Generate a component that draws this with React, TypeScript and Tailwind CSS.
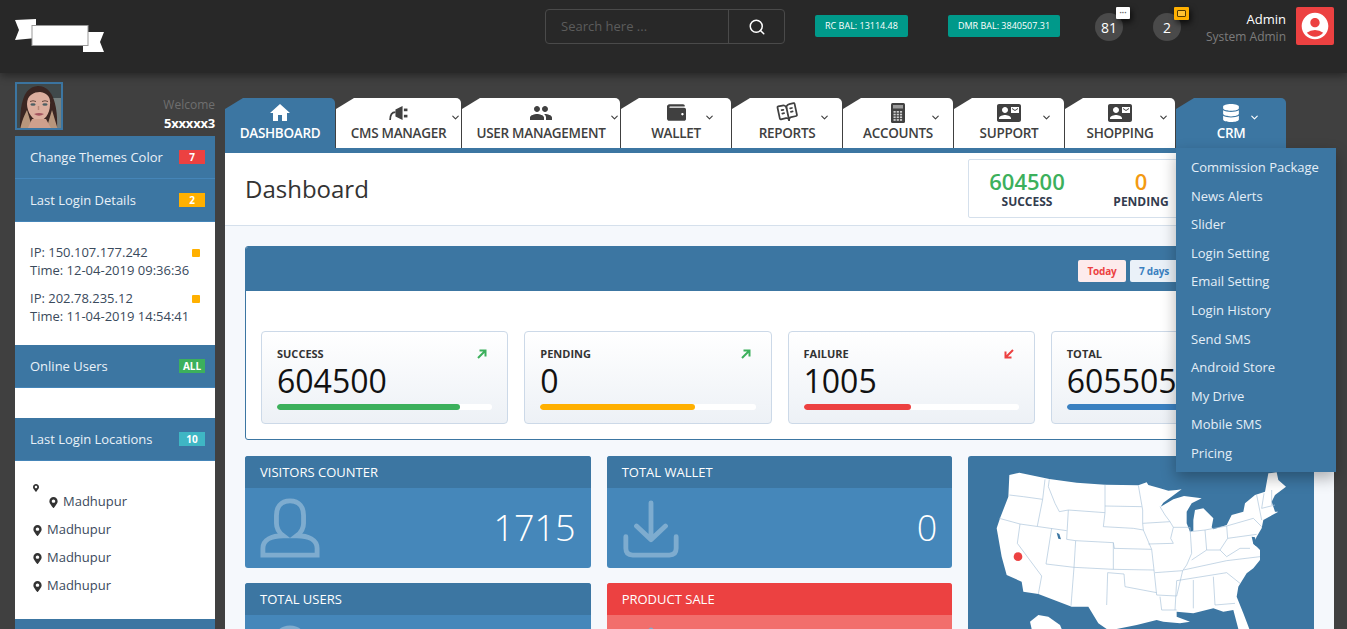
import { BookOpenText, ChevronDown, Search } from 'lucide-react';
import type { ReactNode } from 'react';
import { FaDatabase, FaMapMarkerAlt, FaWallet } from 'react-icons/fa';
import { MdAccountCircle, MdContactMail, MdHome, MdPeople } from 'react-icons/md';

function PlugIcon() {
  return (
    <svg viewBox="0 0 24 18" className="h-[16px] w-[22px]" fill="#404040">
      <path d="M8 5 L16 1 V17 L8 13 Z" />
      <rect x="17.5" y="4" width="4" height="3" />
      <rect x="17.5" y="11" width="4" height="3" />
      <path d="M8 8 C3 8 2 12 2 17" fill="none" stroke="#404040" strokeWidth="2" />
    </svg>
  );
}

function CalculatorIcon() {
  const keys = [0, 1, 2, 3].flatMap((row) => [0, 1, 2].map((col) => ({ x: 2.5 + col * 3.2, y: 8 + row * 2.7 })));
  return (
    <svg viewBox="0 0 14 20" className="h-5 w-[14px]">
      <rect width="14" height="20" rx="1.5" fill="#404040" />
      <rect x="2" y="2" width="10" height="3.5" fill="#9a9a9a" />
      {keys.map((k) => (
        <rect key={`${k.x}-${k.y}`} x={k.x} y={k.y} width="2.2" height="1.7" fill="#cfcfcf" />
      ))}
    </svg>
  );
}

const tabs: { label: string; width: string; icon: ReactNode; active?: boolean; chevron?: string }[] = [
  { label: 'DASHBOARD', width: 'w-[110px]', icon: <MdHome size={24} />, active: true },
  { label: 'CMS MANAGER', width: 'w-[125px]', icon: <PlugIcon />, chevron: 'right-0' },
  { label: 'USER MANAGEMENT', width: 'w-[158px]', icon: <MdPeople size={24} />, chevron: 'right-0' },
  { label: 'WALLET', width: 'w-[110px]', icon: <FaWallet size={19} />, chevron: 'right-[16px]' },
  { label: 'REPORTS', width: 'w-[110px]', icon: <BookOpenText size={21} className="-rotate-12" />, chevron: 'right-[12px]' },
  { label: 'ACCOUNTS', width: 'w-[110px]', icon: <CalculatorIcon />, chevron: 'right-[12px]' },
  { label: 'SUPPORT', width: 'w-[110px]', icon: <MdContactMail size={24} />, chevron: 'right-[12px]' },
  { label: 'SHOPPING', width: 'w-[110px]', icon: <MdContactMail size={24} />, chevron: 'right-[6px]' },
  { label: 'CRM', width: 'w-[110px]', icon: <FaDatabase size={18} />, active: true, chevron: 'right-[26px]' },
];

const crmLinks = [
  'Commission Package',
  'News Alerts',
  'Slider',
  'Login Setting',
  'Email Setting',
  'Login History',
  'Send SMS',
  'Android Store',
  'My Drive',
  'Mobile SMS',
  'Pricing',
];

const stats = [
  { label: 'SUCCESS', value: '604500', bar: 'bg-[#3cb05c]', fill: 'w-[85%]', up: true },
  { label: 'PENDING', value: '0', bar: 'bg-[#ffb000]', fill: 'w-[72%]', up: true },
  { label: 'FAILURE', value: '1005', bar: 'bg-[#ec4141]', fill: 'w-1/2', up: false },
  { label: 'TOTAL', value: '605505', bar: 'bg-[#3a80c0]', fill: 'w-[80%]', up: true },
];

function TrendArrow({ up }: { up: boolean }) {
  return (
    <svg viewBox="0 0 10 10" className={`h-[10px] w-[10px] ${up ? 'text-[#3cb05c]' : '-scale-100 text-[#ec4141]'}`} fill="none" stroke="currentColor" strokeWidth="2">
      <path d="M1 9 L8 2 M2.5 1.5 H8.5 V7.5" />
    </svg>
  );
}

function Logo() {
  return (
    <svg viewBox="0 0 90 34" className="h-[34px] w-[90px]">
      <path d="M0 1 L21 0 V19 L0 21 L4 11 Z" fill="#fff" />
      <path d="M68 13 H89 L85 23 L89 33 H68 Z" fill="#fff" />
      <rect x="17" y="6.5" width="56" height="20" fill="#fff" stroke="#999" />
    </svg>
  );
}

function Avatar() {
  return (
    <svg viewBox="0 0 44 44" className="block h-11 w-11">
      <defs>
        <filter id="soft">
          <feGaussianBlur stdDeviation="0.7" />
        </filter>
      </defs>
      <g filter="url(#soft)">
        <rect width="44" height="44" fill="#3f484c" />
        <rect x="30" y="14" width="14" height="30" fill="#76807f" />
        <path d="M3 46 C3 26 4 3 21 2 C37 2 41 24 40 46 Z" fill="#3a2620" />
        <path d="M3 46 C5 36 8 30 10 26 L16 46 Z M41 46 L35 26 L29 46 Z" fill="#b7967c" />
        <path d="M10 20 C10 11 17 8 23 8 C31 9 34 14 33 21 C33 30 27 37 22 37 C16 37 10 28 10 20 Z" fill="#dcae9e" />
        <path d="M15 35 L29 35 L35 46 L10 46 Z" fill="#cfa08d" />
        <ellipse cx="16" cy="20.5" rx="2.6" ry="1.3" fill="#4d5f64" />
        <ellipse cx="28" cy="20.5" rx="2.6" ry="1.3" fill="#4d5f64" />
        <path d="M13 17.5 Q16 16 19 17.5 M25 17.5 Q28 16 31 17.5" fill="none" stroke="#5a3d34" strokeWidth="0.9" />
        <path d="M21.5 22 V26" stroke="#b98878" strokeWidth="1.5" />
        <path d="M17 30 Q22 28 27 30 Q22 33.5 17 30" fill="#a4555f" />
      </g>
    </svg>
  );
}

function UsaMap() {
  const lines = [
    'M148 165 L190 170 L248 178',
    'M255 118 L248 178 L232 258',
    'M118 235 L180 252 L320 272',
    'M268 118 L265 140 L285 190 L298 215 L325 210 L320 298',
    'M275 265 L258 372',
    'M180 252 L172 310 L245 408 L235 462',
    'M320 298 L347 302 L460 308 L463 325',
    'M258 372 L342 382 L460 388 L582 390',
    'M347 302 L342 382 L333 497',
    'M460 308 L460 388',
    'M435 134 L435 218 L430 260 L520 265 L550 270 L575 328 L582 390 L590 465',
    'M325 210 L435 218',
    'M435 198 L545 200',
    'M535 136 L548 210 L548 250 L550 270',
    'M462 325 L575 328',
    'M548 250 L630 245 L640 262 L632 295 L640 310 L565 312',
    'M600 200 L615 225 L630 245',
    'M640 262 L690 262 L695 340 L680 375 L668 392',
    'M690 275 L735 270 L740 330 L695 360',
    'M735 270 L800 258 L803 295 L780 330 L740 330',
    'M585 398 L668 392 L650 468 L590 465',
    'M670 390 L800 362 L900 350',
    'M443 398 L492 402 L495 440 L590 458',
    'M443 398 L440 495',
    'M600 470 L605 510 L650 510',
    'M650 422 L645 510',
    'M650 422 L800 398 L840 430',
    'M700 420 L700 505',
    'M760 410 L765 495 L825 490',
    'M780 330 L800 350 L840 325 L870 325',
    'M800 258 L880 235 L905 260',
    'M803 295 L890 283',
    'M890 165 L905 240',
    'M912 160 L905 205 L945 195',
    'M935 150 L935 195',
  ];
  return (
    <svg viewBox="24 48 1038 519" className="block h-[173px] w-[346px]">
      <path
        fill="#fff"
        d="M148 105 L178 98 L268 117 L350 128 L435 134 L535 136 L560 127 L565 135 L600 145 L625 152 L650 150 L665 148 L610 188 L602 200 L640 178 L672 168 L725 175 L695 190 L680 215 L680 250 L690 275 L700 272 L700 240 L705 210 L730 205 L760 235 L755 262 L760 268 L800 255 L815 225 L850 215 L855 190 L885 165 L915 155 L925 100 L950 97 L955 120 L978 140 L945 165 L935 185 L945 215 L955 215 L910 240 L905 265 L890 290 L880 310 L900 330 L900 360 L880 385 L860 400 L835 440 L830 470 L850 520 L868 567 L835 567 L820 510 L790 515 L760 505 L700 520 L650 515 L650 530 L690 545 L660 550 L610 545 L590 540 L530 555 L470 567 L440 567 L415 550 L385 500 L335 500 L235 462 L190 455 L185 425 L140 405 L125 350 L110 265 L120 235 L145 170 Z"
      />
      <path fill="#fff" d="M210 545 L235 525 L265 530 L300 555 L305 567 L215 567 Z" />
      <path fill="#3c76a2" d="M290 278 L298 282 L303 298 L295 296 Z M875 290 L885 292 L890 320 L880 312 Z" />
      {lines.map((d) => (
        <path key={d} d={d} fill="none" stroke="#a9c3da" strokeWidth="2" />
      ))}
      <circle cx="174" cy="350" r="13" fill="#ec4141" />
    </svg>
  );
}

function SideHeader({ title, badge, color }: { title: string; badge: string; color: string }) {
  return (
    <div className="flex h-[43px] items-center justify-between border-b border-[#4585b8] bg-[#3c76a2] pr-[10px] pl-[15px] text-[13px] text-[#e9f1f8]">
      <span className="pt-[2px]">{title}</span>
      <span className={`flex h-[14px] w-[26px] items-center justify-center text-[10px] font-bold text-white ${color}`}>{badge}</span>
    </div>
  );
}

function Place({ className }: { className?: string }) {
  return (
    <div className={`flex h-7 items-center gap-1 text-[13px] text-[#3a4a5c] ${className ?? ''}`}>
      <FaMapMarkerAlt size={11} className="text-[#333]" />
      Madhupur
    </div>
  );
}

function Counter({ title, value, icon, red }: { title: string; value?: string; icon?: ReactNode; red?: boolean }) {
  return (
    <div className={`overflow-hidden rounded-[3px] ${red ? 'bg-[#f26e6c]' : 'bg-[#4587ba]'}`}>
      <div className={`flex h-8 items-center px-[15px] pt-px text-[13px] text-white ${red ? 'bg-[#ec4141]' : 'bg-[#3c76a2]'}`}>{title}</div>
      <div className="flex h-20 items-center justify-between px-[15px]">
        {icon}
        <span className="text-[36px] font-light text-white">{value}</span>
      </div>
    </div>
  );
}

const userIcon = (
  <svg viewBox="0 0 62 62" className="h-[60px] w-[60px]" fill="none" stroke="#7eaccf" strokeWidth="5">
    <path d="M31 3 C21 3 17 10 17 18 V26 C17 32 20 36 24 39 C12 39 3 43 3 52 V59 H59 V52 C59 43 50 39 38 39 C42 36 45 32 45 26 V18 C45 10 41 3 31 3 Z" />
  </svg>
);

const downloadIcon = (
  <svg viewBox="0 0 62 62" className="h-[60px] w-[60px] -translate-x-[1px]" fill="none" stroke="#7eaccf" strokeWidth="5" strokeLinecap="round" strokeLinejoin="round">
    <path d="M31 5 V42 M16 29 L31 43 L46 29" />
    <path d="M5 40 V52 C5 57 8 59 12 59 H50 C54 59 57 57 57 52 V40" />
  </svg>
);

export default function App() {
  return (
    <div className="h-screen overflow-hidden bg-[#404040] font-['Open_Sans',sans-serif]">
      {/* Top bar */}
      <header className="relative z-10 flex h-[73px] bg-[#282828] shadow-[0_3px_8px_rgba(0,0,0,0.4)]">
        <div className="ml-[15px] mt-[19px]">
          <Logo />
        </div>
        <div className="ml-[440px] mt-[9px] flex h-[35px] w-[240px] rounded border border-[#4a4a4a]">
          <span className="flex-1 pl-[15px] text-[13px] leading-[33px] text-[#5c5c5c]">Search here ...</span>
          <span className="flex w-[56px] items-center justify-center border-l border-[#4a4a4a]">
            <Search size={18} className="text-white" />
          </span>
        </div>
        <span className="ml-[30px] mt-[15px] flex h-[22px] w-[93px] items-center justify-center rounded-[2px] bg-[#00998a] text-[9px] text-white">RC BAL: 13114.48</span>
        <span className="ml-10 mt-[15px] flex h-[22px] w-[112px] items-center justify-center rounded-[2px] bg-[#00998a] text-[9px] text-white">DMR BAL: 3840507.31</span>
        <div className="relative ml-[35px] mt-[13px] flex h-7 w-7 items-center justify-center rounded-full bg-[#4a4a4a] text-[14px] text-white">
          81
          <span className="absolute -top-[6px] left-[21px] flex h-[12px] w-[14px] items-center justify-center rounded-[1px] bg-white text-[8px] font-bold leading-none text-[#666] shadow-[2px_3px_6px_rgba(0,0,0,0.7)]">···</span>
        </div>
        <div className="relative ml-[30px] mt-[13px] flex h-7 w-7 items-center justify-center rounded-full bg-[#4a4a4a] text-[14px] text-white">
          2
          <span className="absolute -top-[6px] left-[21px] flex h-[13px] w-[15px] items-center justify-center rounded-[1px] bg-[#ffb000] shadow-[2px_3px_6px_rgba(0,0,0,0.7)]">
            <span className="h-[7px] w-[9px] rounded-[1px] border border-[#553a00] bg-[#ffc233]" />
          </span>
        </div>
        <div className="ml-auto mt-[10px] text-right">
          <div className="text-[13px] leading-[18px] text-white">Admin</div>
          <div className="text-[12px] leading-[18px] text-[#7c7c7c]">System Admin</div>
        </div>
        <div className="mr-[13px] ml-[10px] mt-[7px] flex h-[38px] w-[38px] items-center justify-center rounded-[2px] bg-[#ec4141]">
          <MdAccountCircle size={32} className="text-white" />
        </div>
      </header>

      <div className="flex gap-[10px] pr-[13px] pl-[15px]">
        {/* Sidebar */}
        <aside className="w-[200px] shrink-0 pt-[9px]">
          <div className="flex h-[54px] items-start justify-between">
            <div className="border-2 border-[#3c76a2]">
              <Avatar />
            </div>
            <div className="mt-[14px] text-right">
              <div className="text-[12px] leading-[17px] text-[#6f6f6f]">Welcome</div>
              <div className="text-[13px] font-bold leading-[20px] tracking-[-0.2px] text-white">5xxxxx3</div>
            </div>
          </div>
          <SideHeader title="Change Themes Color" badge="7" color="bg-[#ec4141]" />
          <SideHeader title="Last Login Details" badge="2" color="bg-[#ffb000]" />
          <div className="h-[123px] bg-white px-[15px] pt-[21px] text-[13px] leading-[18px] text-[#3a4a5c]">
            <div className="relative mb-[10px]">
              <span className="absolute top-[6px] right-0 h-2 w-2 rounded-[1px] bg-[#ffb000]" />
              <div>IP: 150.107.177.242</div>
              <div>Time: 12-04-2019 09:36:36</div>
            </div>
            <div className="relative">
              <span className="absolute top-[6px] right-0 h-2 w-2 rounded-[1px] bg-[#ffb000]" />
              <div>IP: 202.78.235.12</div>
              <div>Time: 11-04-2019 14:54:41</div>
            </div>
          </div>
          <SideHeader title="Online Users" badge="ALL" color="bg-[#3cb05c]" />
          <div className="h-[30px] bg-white" />
          <SideHeader title="Last Login Locations" badge="10" color="bg-[#3fb6c4]" />
          <div className="h-[158px] bg-white pt-[23px] pl-[17px]">
            <FaMapMarkerAlt size={8} className="text-[#333]" />
            <Place className="-mt-[4px] ml-4" />
            <Place />
            <Place />
            <Place />
          </div>
          <div className="h-10 bg-[#3c76a2]" />
        </aside>

        {/* Main */}
        <main className="relative min-w-0 flex-1 pt-[25px]">
          <nav className="flex gap-px">
            {tabs.map((tab) => (
              <div
                key={tab.label}
                className={`relative flex h-[50px] shrink-0 flex-col items-center rounded-tr-[5px] [clip-path:polygon(0_11px,18px_0,100%_0,100%_100%,0_100%)] ${tab.width} ${tab.active ? 'bg-[#3c76a2] text-white' : 'bg-white text-[#404040]'}`}
              >
                <div className="flex h-[26px] items-center pt-[3px]">{tab.icon}</div>
                <div className="text-[13.5px] font-semibold leading-[19px] tracking-[-0.3px]">{tab.label}</div>
                {tab.chevron && <ChevronDown size={11} strokeWidth={2.5} className={`absolute top-[14px] ${tab.chevron}`} />}
              </div>
            ))}
          </nav>
          <div className="h-[5px] bg-[#3c76a2]" />

          <div className="bg-[#f5f8fc]">
            <div className="flex h-[73px] items-start justify-between border-b border-[#d5e0ec] bg-white pt-[6px] pr-4 pl-5">
              <h1 className="self-center pb-[6px] text-[24px] leading-none text-[#333]">Dashboard</h1>
              <div className="grid h-[59px] w-[350px] grid-cols-[116px_112px_1fr] rounded-[2px] border border-[#d5e0ec] pt-[7px] text-center">
                <div>
                  <div className="text-[22px] font-semibold leading-[28px] text-[#3cb05c]">604500</div>
                  <div className="text-[12px] font-bold leading-[14px] text-[#333c4e]">SUCCESS</div>
                </div>
                <div>
                  <div className="text-[22px] font-semibold leading-[28px] text-[#f39a12]">0</div>
                  <div className="text-[12px] font-bold leading-[14px] text-[#333c4e]">PENDING</div>
                </div>
              </div>
            </div>

            <div className="px-5 pt-5">
              {/* Stats */}
              <section className="h-[194px] overflow-hidden rounded-[3px] border border-[#3c76a2] bg-white">
                <div className="flex h-[44px] items-start gap-1 bg-[#3c76a2] pt-[13px] pl-[832px]">
                  <span className="flex h-[22px] w-[48px] items-center justify-center rounded-[2px] bg-[#fdebec] text-[10px] font-bold tracking-[-0.2px] text-[#ec4141]">Today</span>
                  <span className="flex h-[22px] w-[48px] items-center justify-center rounded-[2px] bg-[#eaf1f8] text-[10px] font-bold tracking-[-0.2px] text-[#3a80c0]">7 days</span>
                </div>
                <div className="grid grid-cols-4 gap-4 px-[15px] pt-[40px]">
                  {stats.map((s) => (
                    <div key={s.label} className="h-[93px] rounded-[4px] border border-[#ccd9e8] bg-linear-to-b from-white to-[#edf1f6] px-[15px] pt-[13px]">
                      <div className="flex items-center justify-between pr-[5px]">
                        <span className="text-[11px] font-bold leading-[18px] text-[#333]">{s.label}</span>
                        <TrendArrow up={s.up} />
                      </div>
                      <div className="text-[32px] leading-[36px] text-[#111]">{s.value}</div>
                      <div className="mt-[5px] h-[6px] overflow-hidden rounded-full bg-white">
                        <div className={`h-full rounded-full ${s.bar} ${s.fill}`} />
                      </div>
                    </div>
                  ))}
                </div>
              </section>

              {/* Counters and map */}
              <section className="mt-4 grid auto-rows-[112px] grid-cols-3 gap-x-4 gap-y-[15px]">
                <Counter title="VISITORS COUNTER" value="1715" icon={userIcon} />
                <Counter title="TOTAL WALLET" value="0" icon={downloadIcon} />
                <div className="row-span-2 overflow-hidden rounded-[3px] bg-[#3c76a2]">
                  <UsaMap />
                </div>
                <Counter title="TOTAL USERS" icon={userIcon} />
                <Counter title="PRODUCT SALE" icon={downloadIcon} red />
              </section>
            </div>
          </div>

          {/* CRM dropdown */}
          <div className="absolute top-[75px] left-[951px] z-20 h-[324px] w-[160px] bg-[#3c76a2] pt-[5px] pl-[15px] shadow-[0_6px_14px_rgba(0,0,0,0.3)]">
            {crmLinks.map((link) => (
              <div key={link} className="text-[13px] leading-[28.6px] text-[#e4eef7]">{link}</div>
            ))}
          </div>
        </main>
      </div>
    </div>
  );
}
